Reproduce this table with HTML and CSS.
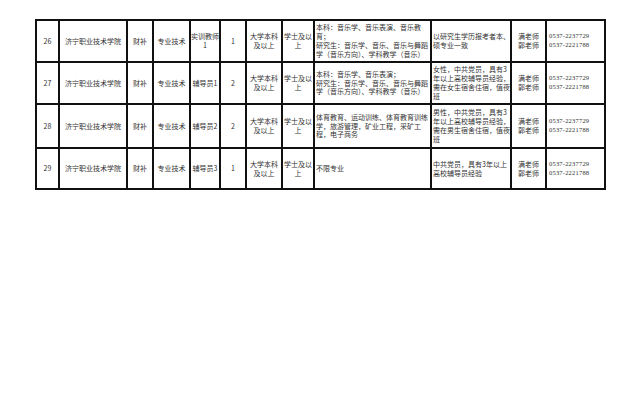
FILE: index.html
```html
<!DOCTYPE html>
<html lang="zh">
<head>
<meta charset="utf-8">
<link rel="stylesheet" href="styles.css">
</head>
<body>
<table class="grid">
  <colgroup>
    <col class="c-no"><col class="c-unit"><col class="c-fund"><col class="c-type"><col class="c-post"><col class="c-num"><col class="c-edu"><col class="c-deg"><col class="c-major"><col class="c-req"><col class="c-who"><col class="c-tel">
  </colgroup>
  <tr class="r1">
    <td>26</td><td>济宁职业技术学院</td><td>财补</td><td>专业技术</td><td>实训教师<br>1</td><td>1</td><td>大学本科<br>及以上</td><td>学士及以<br>上</td>
    <td class="left">本科：音乐学、音乐表演、音乐教<br>育；<br>研究生：音乐学、音乐、音乐与舞蹈<br>学（音乐方向）、学科教学（音乐）</td>
    <td class="left">以研究生学历报考者本、<br>硕专业一致</td><td>满老师<br>郭老师</td><td class="tel">0537-2237729<br>0537-2221788</td>
  </tr>
  <tr class="r2">
    <td>27</td><td>济宁职业技术学院</td><td>财补</td><td>专业技术</td><td>辅导员1</td><td>2</td><td>大学本科<br>及以上</td><td>学士及以<br>上</td>
    <td class="left">本科：音乐学、音乐表演；<br>研究生：音乐学、音乐、音乐与舞蹈<br>学（音乐方向）、学科教学（音乐）</td>
    <td class="left">女性，中共党员，具有3<br>年以上高校辅导员经验，<br>需在女生宿舍住宿，值夜<br>班</td><td>满老师<br>郭老师</td><td class="tel">0537-2237729<br>0537-2221788</td>
  </tr>
  <tr class="r3">
    <td>28</td><td>济宁职业技术学院</td><td>财补</td><td>专业技术</td><td>辅导员2</td><td>2</td><td>大学本科<br>及以上</td><td>学士及以<br>上</td>
    <td class="left">体育教育、运动训练、体育教育训练<br>学，旅游管理，矿业工程，采矿工<br>程，电子商务</td>
    <td class="left">男性，中共党员，具有3<br>年以上高校辅导员经验，<br>需在男生宿舍住宿，值夜<br>班</td><td>满老师<br>郭老师</td><td class="tel">0537-2237729<br>0537-2221788</td>
  </tr>
  <tr class="r4">
    <td>29</td><td>济宁职业技术学院</td><td>财补</td><td>专业技术</td><td>辅导员3</td><td>1</td><td>大学本科<br>及以上</td><td>学士及以<br>上</td>
    <td class="left">不限专业</td>
    <td class="left">中共党员，具有3年以上<br>高校辅导员经验</td><td>满老师<br>郭老师</td><td class="tel">0537-2237729<br>0537-2221788</td>
  </tr>
</table>
</body>
</html>
```
FILE: styles.css
```css
html, body {
  margin: 0;
  padding: 0;
  background: #fff;
}
body {
  padding: 19px 0 0 35px;
  font-family: "Noto Sans CJK SC", "Liberation Serif", serif;
  color: #333;
}
.grid {
  border-collapse: collapse;
  table-layout: fixed;
  width: 569px;
}
.grid td {
  border: 2px solid #111;
  font-size: 7px;
  line-height: 8.8px;
  padding: 0;
  text-align: center;
  vertical-align: middle;
  white-space: nowrap;
  overflow: hidden;
}
.grid td.left {
  text-align: left;
  padding-left: 1px;
}
.grid td.tel {
  text-align: left;
  padding-left: 2px;
  font-family: "Liberation Serif", serif;
  font-size: 6.5px;
  letter-spacing: 0.2px;
}
.c-no { width: 23px; }
.c-unit { width: 68px; }
.c-fund { width: 26px; }
.c-type { width: 37px; }
.c-post { width: 30px; }
.c-num { width: 26px; }
.c-edu { width: 36px; }
.c-deg { width: 32px; }
.c-major { width: 117px; }
.c-req { width: 80px; }
.c-who { width: 35px; }
.c-tel { width: 59px; }
.r1 td { height: 40px; }
.r2 td { height: 40px; }
.r3 td { height: 42px; }
.r4 td { height: 39px; }
```
